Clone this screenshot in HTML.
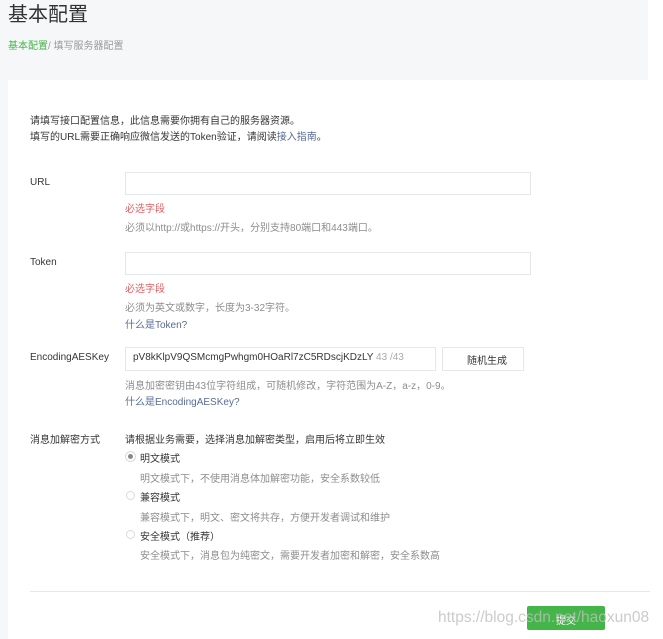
<!DOCTYPE html><html><head><meta charset="utf-8"><style>
body{margin:0;width:663px;height:639px;background:#fff;position:relative;overflow:hidden;font-family:"Liberation Sans","Noto Sans CJK SC",sans-serif;color:#353535}
.a{position:absolute;white-space:nowrap}
.s{font-size:10px}
.g{color:#8d8d8d}.r{color:#e15f63}.l{color:#576b95}
.in{position:absolute;border:1px solid #e4e8eb;background:#fff;box-sizing:border-box}
.rad{position:absolute;width:9px;height:9px;border:1px solid #d9dadc;border-radius:50%;box-sizing:border-box}
</style></head><body>
<div class="a" style="left:0;top:0;width:648px;height:80px;background:#f6f7f9"></div>
<div class="a" style="left:0;top:80px;width:8px;height:559px;background:#f6f7f9"></div>
<div class="a" style="left:8px;top:-2px;font-size:20px;color:#333">基本配置</div>
<div class="a s" style="left:8px;top:37px;color:#999"><span style="color:#44b549">基本配置</span>/ 填写服务器配置</div>
<div class="a s" style="left:30px;top:112px">请填写接口配置信息，此信息需要你拥有自己的服务器资源。</div>
<div class="a s" style="left:30px;top:128px">填写的URL需要正确响应微信发送的Token验证，请阅读<span class="l">接入指南</span>。</div>
<div class="a s" style="left:30px;top:177px">URL</div>
<div class="in" style="left:125px;top:172px;width:406px;height:23px"></div>
<div class="a s r" style="left:125px;top:200px">必选字段</div>
<div class="a s g" style="left:125px;top:219px">必须以http://或https://开头，分别支持80端口和443端口。</div>
<div class="a s" style="left:30px;top:257px">Token</div>
<div class="in" style="left:125px;top:252px;width:406px;height:23px"></div>
<div class="a s r" style="left:125px;top:280px">必选字段</div>
<div class="a s g" style="left:125px;top:299px">必须为英文或数字，长度为3-32字符。</div>
<div class="a s l" style="left:125px;top:316px">什么是Token?</div>
<div class="a s" style="left:30px;top:352px">EncodingAESKey</div>
<div class="in" style="left:125px;top:347px;width:311px;height:24px"></div>
<div class="a s" style="left:133px;top:352px">pV8kKlpV9QSMcmgPwhgm0HOaRl7zC5RDscjKDzLY <span style="color:#aaa">43 /43</span></div>
<div class="in" style="left:442px;top:347px;width:82px;height:24px"></div>
<div class="a s" style="left:467px;top:352px">随机生成</div>
<div class="a s g" style="left:125px;top:377px">消息加密密钥由43位字符组成，可随机修改，字符范围为A-Z，a-z，0-9。</div>
<div class="a s l" style="left:125px;top:393px">什么是EncodingAESKey?</div>
<div class="a s" style="left:30px;top:431px">消息加解密方式</div>
<div class="a s" style="left:125px;top:431px">请根据业务需要，选择消息加解密类型，启用后将立即生效</div>
<div class="rad" style="left:126px;top:452px;border:2.5px solid #fff;background:#888;box-shadow:0 0 0 1px #d9dadc"></div>
<div class="a s" style="left:140px;top:450px">明文模式</div>
<div class="a s g" style="left:140px;top:470px">明文模式下，不使用消息体加解密功能，安全系数较低</div>
<div class="rad" style="left:126px;top:491px"></div>
<div class="a s" style="left:140px;top:489px">兼容模式</div>
<div class="a s g" style="left:140px;top:509px">兼容模式下，明文、密文将共存，方便开发者调试和维护</div>
<div class="rad" style="left:126px;top:530px"></div>
<div class="a s" style="left:140px;top:528px">安全模式（推荐）</div>
<div class="a s g" style="left:140px;top:547px">安全模式下，消息包为纯密文，需要开发者加密和解密，安全系数高</div>
<div class="a" style="left:30px;top:591px;width:620px;height:1px;background:#e7e7eb"></div>
<div class="a" style="left:527px;top:606px;width:78px;height:24px;background:#44b549;border-radius:2px"></div>
<div class="a s" style="left:556px;top:612px;color:#fff">提交</div>
<div class="a" style="left:438px;top:609px;font-size:15.5px;color:rgba(190,190,190,.8)">https://blog.csdn.net/haoxun08</div>
</body></html>
